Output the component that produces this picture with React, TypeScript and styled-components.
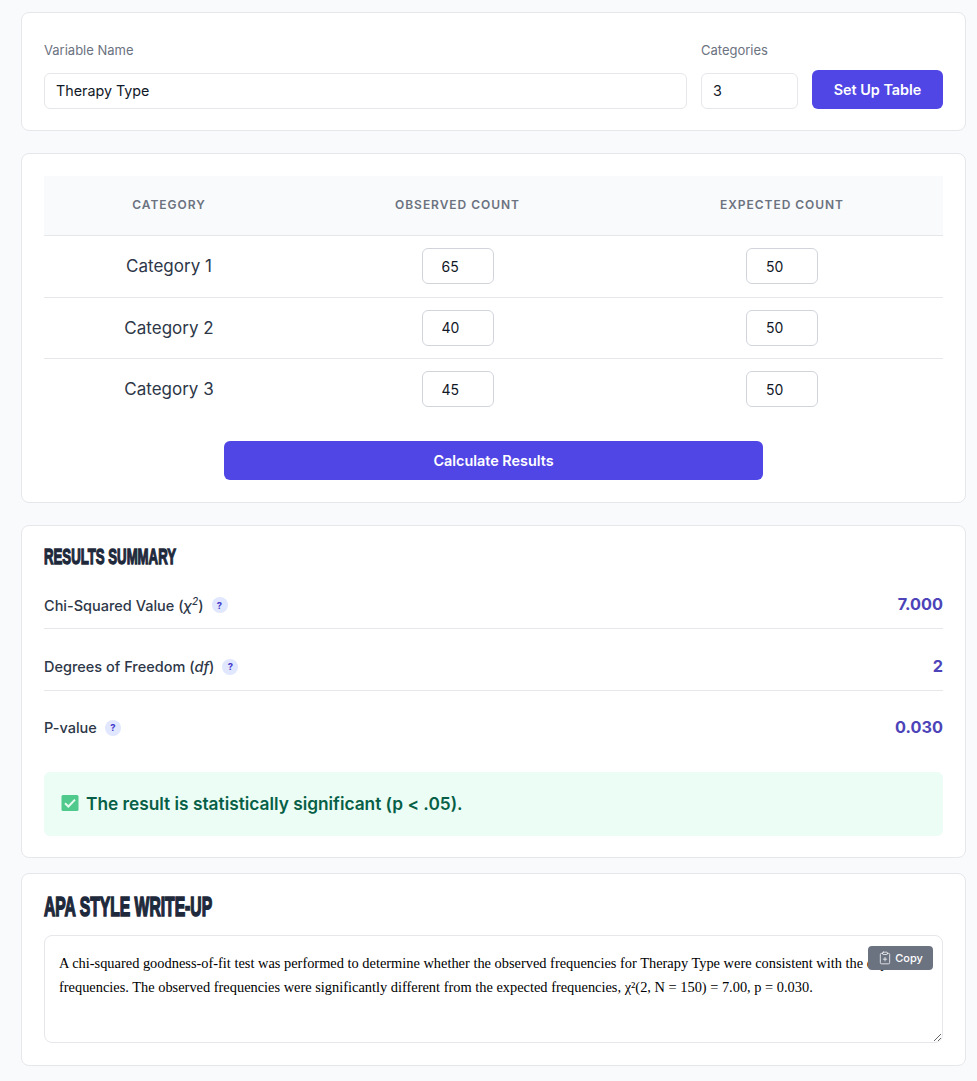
import React from "react";
import styled, { createGlobalStyle } from "styled-components";
import { ClipboardPlus } from "lucide-react";

const Global = createGlobalStyle`
  html, body { margin: 0; padding: 0; background: #f8fafc; }
  body { font-family: Inter, "Liberation Sans", sans-serif; color: #1f2937; }
  * { box-sizing: border-box; }
`;

const Page = styled.main`
  width: 977px;
  height: 1081px;
  overflow: hidden;
  padding: 12px 11px 0 21px;
  display: flex;
  flex-direction: column;
`;

const Card = styled.section<{ $top: number; $height: number }>`
  margin-top: ${(p) => p.$top}px;
  height: ${(p) => p.$height}px;
  flex: none;
  background: #fff;
  border: 1px solid #e5e7eb;
  border-radius: 8px;
  padding: 0 22px;
  display: flex;
  flex-direction: column;
`;

const SetupRow = styled.div`
  display: flex;
  align-items: flex-end;
  padding-top: 29px;
`;

const Field = styled.div<{ $width: number; $gap: number }>`
  width: ${(p) => p.$width}px;
  margin-right: ${(p) => p.$gap}px;
  flex: none;
  display: flex;
  flex-direction: column;
`;

const Label = styled.label`
  font-size: 13px;
  line-height: 16px;
  color: #6b7280;
  margin-bottom: 15px;
`;

const TextInput = styled.input`
  width: 100%;
  height: 36px;
  border: 1px solid #e5e7eb;
  border-radius: 6px;
  padding: 0 11px 2px;
  font: 400 14.3px Inter, sans-serif;
  color: #111827;
  background: #fff;
  outline: none;
`;

const PrimaryButton = styled.button<{ $width: number }>`
  width: ${(p) => p.$width}px;
  height: 39px;
  flex: none;
  border: none;
  border-radius: 6px;
  background: #4f46e5;
  color: #fff;
  font: 600 14.4px Inter, sans-serif;
`;

const Table = styled.div`
  margin-top: 22px;
  display: grid;
  grid-template-columns: 250px 327px 322px;
`;

const HeadCell = styled.div`
  height: 60px;
  padding-bottom: 2px;
  background: #f9fafb;
  border-bottom: 1px solid #e5e7eb;
  display: flex;
  align-items: center;
  justify-content: center;
  font-size: 12px;
  font-weight: 600;
  letter-spacing: 0.96px;
  color: #6b7280;
`;

const Cell = styled.div<{ $last?: boolean }>`
  height: 61.5px;
  border-bottom: 1px solid ${(p) => (p.$last ? "transparent" : "#e5e7eb")};
  display: flex;
  align-items: center;
  justify-content: center;
  font-size: 17px;
  color: #2d3748;
`;

const CountInput = styled.input`
  width: 72px;
  height: 36px;
  border: 1px solid #d1d5db;
  border-radius: 6px;
  padding: 0 19px;
  font: 400 14px Inter, sans-serif;
  color: #111827;
  background: #fff;
  outline: none;
`;

const Centered = styled.div`
  display: flex;
  justify-content: center;
  margin-top: 20.5px;
`;

const Heading = styled.h2<{ $size: number; $top: number; $bottom: number; $scale: number }>`
  margin: ${(p) => p.$top}px 0 ${(p) => p.$bottom}px;
  font-family: "Liberation Sans", Arial, sans-serif;
  font-weight: 700;
  font-size: ${(p) => p.$size}px;
  line-height: ${(p) => p.$size}px;
  color: #1e293b;
  -webkit-text-stroke: ${(p) => p.$size * 0.06}px #1e293b;
  transform: scaleX(${(p) => p.$scale});
  transform-origin: left center;
  white-space: nowrap;
`;

const ResultRow = styled.div<{ $last?: boolean }>`
  height: 61.5px;
  padding-bottom: ${(p) => (p.$last ? 16 : 14.5)}px;
  border-bottom: ${(p) => (p.$last ? "none" : "1px solid #e5e7eb")};
  display: flex;
  align-items: flex-end;
  justify-content: space-between;
`;

const ResultLabel = styled.div`
  display: flex;
  align-items: center;
  gap: 8px;
  font-size: 14.5px;
  font-weight: 500;
  color: #2d3748;
`;

const Help = styled.span`
  width: 16px;
  height: 16px;
  border-radius: 50%;
  background: #e0e7ff;
  color: #4338ca;
  font-size: 9.5px;
  font-weight: 700;
  display: flex;
  align-items: center;
  justify-content: center;
`;

const ResultValue = styled.span`
  font-size: 16.3px;
  font-weight: 700;
  color: #4c44b8;
  margin-bottom: -0.5px;
`;

const Alert = styled.div`
  margin-top: 20px;
  height: 64px;
  background: #ecfdf5;
  border-radius: 6px;
  padding: 0 17px 2px;
  display: flex;
  align-items: center;
  gap: 7px;
  font-size: 17.3px;
  font-weight: 600;
  color: #065f46;
`;

const WriteUp = styled.div`
  position: relative;
  height: 108px;
`;

const Area = styled.textarea`
  display: block;
  width: 100%;
  height: 108px;
  border: 1px solid #e5e7eb;
  border-radius: 8px;
  padding: 15px 14px;
  font: 400 14.4px/24.4px "Liberation Serif", "Times New Roman", serif;
  color: #000;
  background: #fff;
  outline: none;
`;

const CopyButton = styled.button`
  position: absolute;
  top: 11px;
  right: 10px;
  width: 65px;
  height: 24px;
  border: none;
  border-radius: 4px;
  background: #6b7280;
  color: #fff;
  font: 500 11px Inter, sans-serif;
  display: flex;
  align-items: center;
  justify-content: center;
  gap: 3px;
  padding: 0;
`;

const Var = styled.i`
  font-style: italic;
`;

const Sup = styled.sup`
  font-size: 10px;
  line-height: 0;
`;

const CheckMark = () => (
  <svg width="18" height="18" viewBox="0 0 18 18" aria-hidden="true">
    <rect x="0.5" y="1" width="17" height="16" rx="1.5" fill="#4fc98c" />
    <path d="M4 9.2l3.4 3.3L14 5.6" fill="none" stroke="#e8fbf0" strokeWidth="2" />
  </svg>
);

const rows = [
  { name: "Category 1", obs: "65" },
  { name: "Category 2", obs: "40" },
  { name: "Category 3", obs: "45" },
];

const text =
  "A chi-squared goodness-of-fit test was performed to determine whether the observed frequencies for Therapy Type were consistent with the expected frequencies. The observed frequencies were significantly different from the expected frequencies, χ²(2, N = 150) = 7.00, p = 0.030.";

export default function App() {
  return (
    <>
      <Global />
      <Page>
        <Card $top={0} $height={119}>
          <SetupRow>
            <Field $width={643} $gap={14}>
              <Label>Variable Name</Label>
              <TextInput defaultValue="Therapy Type" />
            </Field>
            <Field $width={97} $gap={14}>
              <Label>Categories</Label>
              <TextInput defaultValue="3" />
            </Field>
            <PrimaryButton $width={131}>Set Up Table</PrimaryButton>
          </SetupRow>
        </Card>

        <Card $top={22} $height={350}>
          <Table>
            <HeadCell>CATEGORY</HeadCell>
            <HeadCell>OBSERVED COUNT</HeadCell>
            <HeadCell>EXPECTED COUNT</HeadCell>
            {rows.map((r, i) => (
              <React.Fragment key={r.name}>
                <Cell $last={i === 2}>{r.name}</Cell>
                <Cell $last={i === 2}>
                  <CountInput defaultValue={r.obs} />
                </Cell>
                <Cell $last={i === 2}>
                  <CountInput defaultValue="50" />
                </Cell>
              </React.Fragment>
            ))}
          </Table>
          <Centered>
            <PrimaryButton $width={539}>Calculate Results</PrimaryButton>
          </Centered>
        </Card>

        <Card $top={22} $height={333}>
          <Heading $size={22} $top={19.5} $bottom={0} $scale={0.6}>RESULTS SUMMARY</Heading>
          <ResultRow>
            <ResultLabel>
              <span>Chi-Squared Value (<Var>χ<Sup>2</Sup></Var>)</span>
              <Help>?</Help>
            </ResultLabel>
            <ResultValue>7.000</ResultValue>
          </ResultRow>
          <ResultRow>
            <ResultLabel>
              <span>Degrees of Freedom (<Var>df</Var>)</span>
              <Help>?</Help>
            </ResultLabel>
            <ResultValue>2</ResultValue>
          </ResultRow>
          <ResultRow $last>
            <ResultLabel>
              <span>P-value</span>
              <Help>?</Help>
            </ResultLabel>
            <ResultValue>0.030</ResultValue>
          </ResultRow>
          <Alert>
            <CheckMark />
            The result is statistically significant (p &lt; .05).
          </Alert>
        </Card>

        <Card $top={15} $height={193}>
          <Heading $size={28} $top={19} $bottom={14} $scale={0.56}>APA STYLE WRITE-UP</Heading>
          <WriteUp>
            <Area readOnly defaultValue={text} />
            <CopyButton>
              <ClipboardPlus size={14} strokeWidth={1.3} />
              Copy
            </CopyButton>
          </WriteUp>
        </Card>
      </Page>
    </>
  );
}
